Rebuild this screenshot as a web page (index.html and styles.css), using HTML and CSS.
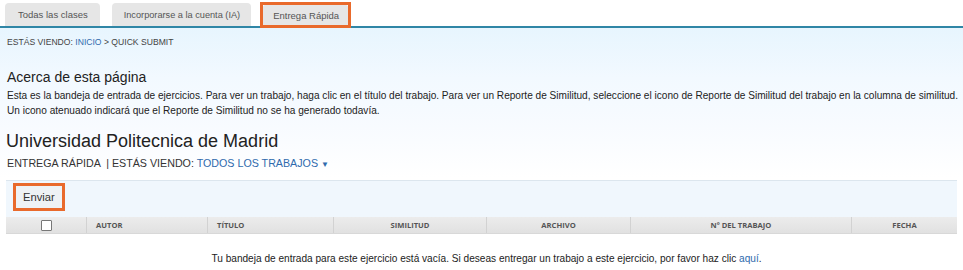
FILE: index.html
```html
<!DOCTYPE html>
<html lang="es">
<head>
<meta charset="utf-8">
<title>Entrega Rápida</title>
<link rel="stylesheet" href="styles.css">
</head>
<body>
<div class="tabs">
  <a class="tab">Todas las clases</a>
  <a class="tab tab-narrow">Incorporarse a la cuenta (IA)</a>
  <span class="hl-tab"><a class="tab active">Entrega Rápida</a></span>
</div>
<div class="page">
  <div class="crumbs">ESTÁS VIENDO: <a class="link">INICIO</a> &gt; QUICK SUBMIT</div>
  <div class="about">
    <h2>Acerca de esta página</h2>
    <p>Esta es la bandeja de entrada de ejercicios. Para ver un trabajo, haga clic en el título del trabajo. Para ver un Reporte de Similitud, seleccione el icono de Reporte de Similitud del trabajo en la columna de similitud.<br>Un icono atenuado indicará que el Reporte de Similitud no se ha generado todavía.</p>
  </div>
  <h1 class="title">Universidad Politecnica de Madrid</h1>
  <div class="sub">ENTREGA RÁPIDA &nbsp;| ESTÁS VIENDO: <a class="link">TODOS LOS TRABAJOS</a> <span class="caret">▼</span></div>
  <div class="toolbar">
    <span class="hl-btn"><button class="btn">Enviar</button></span>
  </div>
  <div class="thead">
    <div class="th c-check"><span class="checkbox"></span></div>
    <div class="th c-autor left">AUTOR</div>
    <div class="th c-titulo left">TÍTULO</div>
    <div class="th c-sim">SIMILITUD</div>
    <div class="th c-arch">ARCHIVO</div>
    <div class="th c-num">Nº DEL TRABAJO</div>
    <div class="th c-fecha">FECHA</div>
  </div>
  <p class="empty">Tu bandeja de entrada para este ejercicio está vacía. Si deseas entregar un trabajo a este ejercicio, por favor haz clic <a class="link">aquí</a>.</p>
</div>
</body>
</html>
```
FILE: styles.css
```css
* { box-sizing: border-box; }
body {
  margin: 0;
  font-family: "Liberation Sans", Arial, sans-serif;
  color: #333;
  background: #fff;
}
.tabs {
  display: flex;
  align-items: flex-end;
  gap: 12px;
  height: 28px;
  padding-left: 5px;
  border-bottom: 2px solid #2f86a6;
}
.tab {
  display: flex;
  align-items: center;
  justify-content: center;
  height: 23px;
  padding: 0 12px 0 13px;
  background: #e6e6e6;
  border-radius: 4px 4px 0 0;
  font-size: 9.5px;
  color: #555;
}
.tab.tab-narrow { font-size: 9.2px; padding: 0 11px 0 12px; }
.tab.active { padding: 0 9px 0 10px; height: 20px; border-radius: 2px 2px 0 0; }
.hl-tab {
  display: flex;
  border: 3px solid #e96a2c;
  margin-left: -3px;
  margin-bottom: -2px;
  position: relative;
  z-index: 1;
  background: #fff;
}
.page {
  background: linear-gradient(#e7f5fe 0, #f2f9ff 50px, #f8fbff 100px, #ffffff 150px);
  padding: 0 6px;
}
.crumbs {
  font-size: 8.6px;
  line-height: 10px;
  color: #444;
  padding: 9px 1px 0;
  margin-bottom: 22px;
}
.link { color: #2f6aad; }
.about h2 {
  margin: 0;
  font-weight: normal;
  font-size: 14px;
  line-height: 17px;
  color: #222;
  padding-left: 1px;
}
.about p {
  margin: 2px 0 0;
  font-size: 10.1px;
  line-height: 15px;
  color: #222;
  padding-left: 1px;
  white-space: nowrap;
}
.title {
  margin: 12px 0 0;
  font-weight: normal;
  font-size: 18px;
  line-height: 22px;
  color: #222;
}
.sub {
  font-size: 10.7px;
  line-height: 13px;
  color: #333;
  margin-top: 5px;
  padding-left: 1px;
}
.caret { font-size: 8px; color: #2f6aad; }
.toolbar {
  margin-top: 9px;
  border-top: 1px solid #dce6ee;
  background: #f0f7fd;
  height: 37px;
  padding: 2px 0 0 7px;
}
.hl-btn {
  display: inline-flex;
  border: 3px solid #e96a2c;
}
.btn {
  font-family: inherit;
  font-size: 11.2px;
  color: #333;
  background: #eef2f5;
  border: 0;
  height: 22px;
  padding: 0 7px;
}
.thead {
  display: flex;
  height: 17px;
  background: linear-gradient(#ececec, #e1e1e1);
  border-bottom: 1px solid #d8d8d8;
  width: 951px;
}
.th {
  display: flex;
  align-items: center;
  justify-content: center;
  font-family: "Open Sans", sans-serif;
  font-weight: 700;
  font-size: 7.6px;
  color: #555;
  border-left: 1px solid #d2d2d2;
}
.th:first-child { border-left: 0; }
.th.left { justify-content: flex-start; padding-left: 9px; }
.c-check { width: 80px; }
.c-autor { width: 121px; }
.c-titulo { width: 126px; }
.c-sim { width: 153px; }
.c-arch { width: 144px; }
.c-num { width: 221px; }
.c-fecha { width: 106px; }
.checkbox {
  width: 11px;
  height: 11px;
  border: 1px solid #777;
  background: #fff;
  border-radius: 1px;
}
.empty {
  margin: 19px 0 0;
  padding-left: 10px;
  text-align: center;
  font-size: 10.1px;
  line-height: 12px;
  color: #222;
}
```
